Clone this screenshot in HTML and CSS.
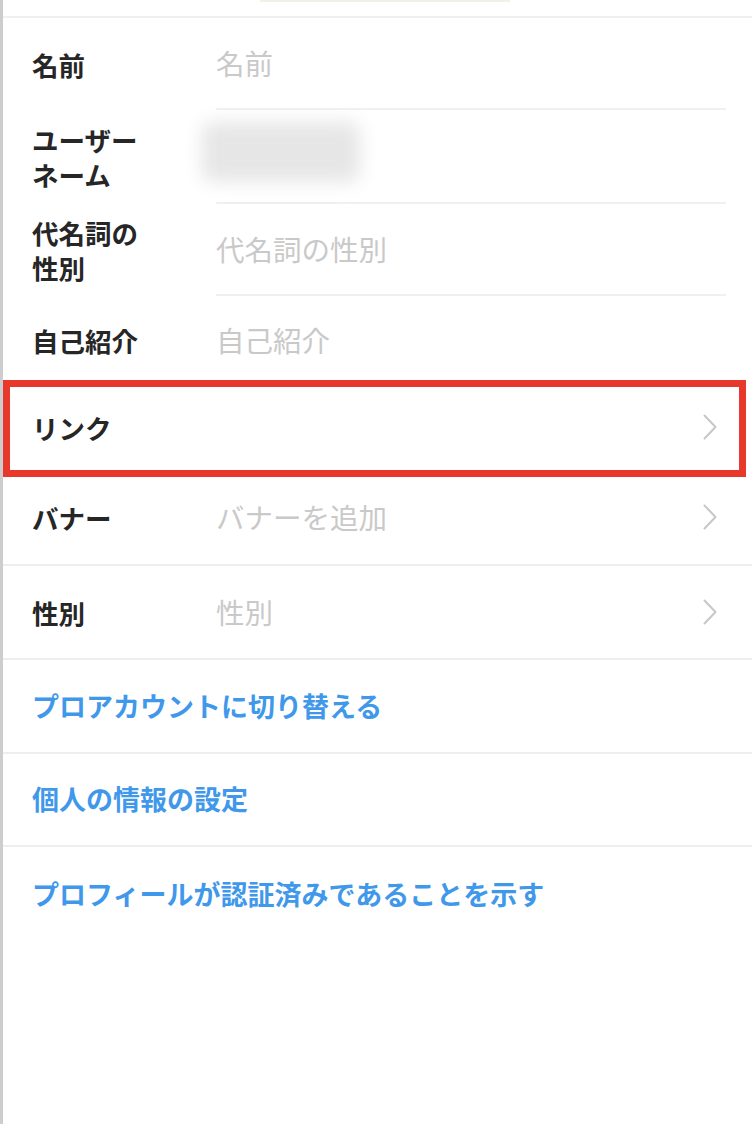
FILE: index.html
```html
<!DOCTYPE html>
<html lang="ja">
<head>
<meta charset="utf-8">
<title>プロフィールを編集</title>
<link rel="stylesheet" href="styles.css">
</head>
<body>
<div class="screen">
  <header class="topbar"><span class="topbar-title"></span></header>

  <section class="fields">
    <div class="field inset h92">
      <div class="label">名前</div>
      <div class="value placeholder">名前</div>
    </div>
    <div class="field inset">
      <div class="label two-line">ユーザー<br>ネーム</div>
      <div class="value"><div class="username-mask"></div></div>
    </div>
    <div class="field inset h92">
      <div class="label two-line">代名詞の<br>性別</div>
      <div class="value placeholder">代名詞の性別</div>
    </div>
    <div class="field h88">
      <div class="label">自己紹介</div>
      <div class="value placeholder">自己紹介</div>
    </div>
    <div class="field h86 highlighted">
      <div class="label">リンク</div>
      <div class="value"></div>
      <svg class="chevron" viewBox="0 0 14 26" width="14" height="26"><path d="M1.5 1.5 L12.5 13 L1.5 24.5"/></svg>
    </div>
    <div class="field full h96">
      <div class="label">バナー</div>
      <div class="value placeholder">バナーを追加</div>
      <svg class="chevron" viewBox="0 0 14 26" width="14" height="26"><path d="M1.5 1.5 L12.5 13 L1.5 24.5"/></svg>
    </div>
    <div class="field full">
      <div class="label">性別</div>
      <div class="value placeholder">性別</div>
      <svg class="chevron" viewBox="0 0 14 26" width="14" height="26"><path d="M1.5 1.5 L12.5 13 L1.5 24.5"/></svg>
    </div>
  </section>

  <section class="actions">
    <a class="action full">プロアカウントに切り替える</a>
    <a class="action full h93">個人の情報の設定</a>
    <a class="action">プロフィールが認証済みであることを示す</a>
  </section>
</div>
</body>
</html>
```

FILE: styles.css
```css
html, body {
  margin: 0;
  padding: 0;
  background: #ffffff;
}

body {
  font-family: "Noto Sans CJK JP", "Noto Sans", sans-serif;
  color: #262626;
}

.screen {
  min-height: 1124px;
  border-left: 3px solid #cdcdcd;
  box-sizing: border-box;
  display: flex;
  flex-direction: column;
}

/* header remnant above the form */
.topbar {
  height: 16px;
  border-bottom: 2px solid #f0f0f0;
  padding-left: 257px;
}

.topbar-title {
  display: block;
  width: 250px;
  height: 2px;
  background: #f1f2e6;
}

/* form rows */
.field {
  position: relative;
  display: grid;
  grid-template-columns: 213px 1fr auto;
  align-items: center;
  height: 94px;
  box-sizing: border-box;
}

.field.h96 { height: 96px; }
.field.h92 { height: 92px; }
.field.h88 { height: 88px; }
.field.h86 { height: 86px; }

.label {
  padding-left: 29px;
  font-size: 26.5px;
  font-weight: 700;
  line-height: 35px;
  color: #262626;
}

.value {
  height: 100%;
  display: flex;
  align-items: center;
  box-sizing: border-box;
  font-size: 28.5px;
  line-height: 1;
}

.placeholder {
  color: #c9c9c9;
  font-weight: 400;
}

.field.inset .value {
  border-bottom: 2px solid #f0f0f0;
  margin-right: 26px;
  grid-column: 2 / 4;
}

.field.full {
  border-bottom: 2px solid #eeeeee;
}

.chevron {
  margin-right: 35px;
  fill: none;
  stroke: #c7c7c7;
  stroke-width: 2;
  stroke-linecap: round;
  stroke-linejoin: round;
}

/* blurred account name */
.username-mask {
  margin-left: -14px;
  margin-top: -8px;
  width: 158px;
  height: 60px;
  background: #e6e6e6;
  border-radius: 10px;
  filter: blur(9px);
}

/* red annotation frame around the link row */
.highlighted::after {
  content: "";
  position: absolute;
  top: -4px;
  bottom: -7px;
  left: 0;
  right: 6px;
  border: 7px solid #e8372b;
  pointer-events: none;
}

/* blue account actions */
.actions {
  display: flex;
  flex-direction: column;
}

.action {
  display: flex;
  align-items: center;
  height: 94px;
  box-sizing: border-box;
  padding-left: 29px;
  padding-bottom: 2px;
  font-size: 27px;
  font-weight: 700;
  color: #3f98ea;
  text-decoration: none;
}

.action.h93 { height: 93px; }

.action.full {
  border-bottom: 2px solid #eeeeee;
}
```
